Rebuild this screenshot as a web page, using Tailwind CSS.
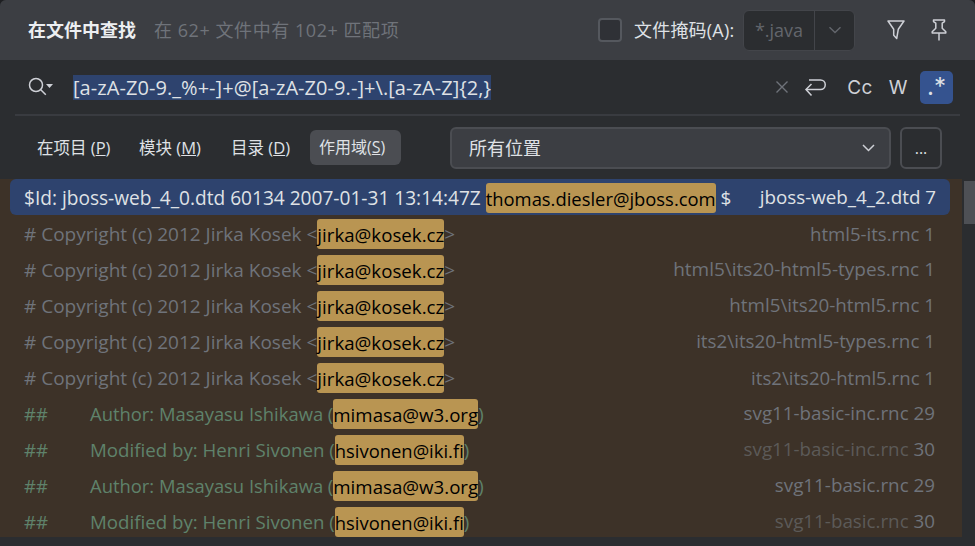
<!DOCTYPE html>
<html lang="zh">
<head>
  <meta charset="UTF-8" />
  <title>在文件中查找</title>
  <script src="https://cdn.jsdelivr.net/npm/@tailwindcss/browser@4"></script>
</head>
<body class="bg-[#1e1f22] overflow-hidden">
  <div class="w-[975px] h-[546px] flex flex-col bg-[#2b2d30] rounded-t-[6px] overflow-hidden text-[#dfe1e5] font-['Open_Sans','Noto_Sans_CJK_SC',sans-serif]">
    <!-- header -->
    <header class="h-[60px] shrink-0 bg-[#3c3e43] flex items-center pl-[28px] text-[18px]">
      <h1 class="font-bold text-[#eceef1] w-[126px]">在文件中查找</h1>
      <span class="text-[#6f737a] tracking-[0.55px]">在 62+ 文件中有 102+ 匹配项</span>
      <div class="ml-auto flex items-center">
        <span class="w-[24px] h-[24px] rounded-[4px] border-2 border-[#55585e] bg-[#2f3136] mr-[12px]"></span>
        <span class="w-[109px] text-[#dfe1e5] tracking-[0.2px]">文件掩码(A):</span>
        <div class="flex h-[41px] w-[112px] rounded-[6px] border border-[#43454a] bg-[#2b2d30] mr-[32px]">
          <span class="w-[70px] flex items-center justify-center text-[#63666c]">*.java</span>
          <span class="flex-1 border-l border-[#43454a] flex items-center justify-center">
            <svg width="14" height="8" viewBox="0 0 14 8" fill="none" stroke="#63666c" stroke-width="1.4"><path d="M1.500 1.200 7 6.600l5.500-5.400"/></svg>
          </span>
        </div>
        <svg class="mr-[26px]" width="18" height="20" viewBox="0 0 18 20" fill="none" stroke="#ced0d6" stroke-width="1.5" stroke-linejoin="round"><path d="M1 1h16l-5.700 8.200-1.600 9.300-3-3.200V9.200z"/></svg>
        <svg class="mr-[28px]" width="16" height="22" viewBox="0 0 16 22" fill="none" stroke="#ced0d6" stroke-width="1.5" stroke-linejoin="round"><path d="M2.500 1h11v1.600l-2.300 1.600v5l3.600 3.600v1.200H1.200v-1.200l3.600-3.600v-5L2.500 2.600zM8 14v7.500"/></svg>
      </div>
    </header>

    <!-- search row -->
    <div class="h-[56px] shrink-0 mx-[15px] border-b-2 border-[#393b40] flex items-center">
      <svg class="ml-[13px]" width="25" height="20" viewBox="0 0 25 20" fill="none" stroke="#ced0d6" stroke-width="1.5"><circle cx="8" cy="8" r="6.500"/><path d="m12.800 12.800 5 5"/><path d="M18 7h7l-3.500 4z" fill="#ced0d6" stroke="none"/></svg>
      <span class="ml-[20px] h-[25px] leading-[25px] bg-[#2e436e] text-[#dfe1e5] text-[20px] tracking-[0.06px] whitespace-pre">[a-zA-Z0-9._%+-]+@[a-zA-Z0-9.-]+\.[a-zA-Z]{2,}</span>
      <div class="ml-auto flex items-center">
        <svg width="12" height="12" viewBox="0 0 12 12" stroke="#6f737a" stroke-width="1.4"><path d="m.5.5 11 11M11.500.5l-11 11"/></svg>
        <svg class="ml-[16px] mt-[2px]" width="22" height="20" viewBox="0 0 22 20" fill="none" stroke="#ced0d6" stroke-width="1.5"><path d="M5 2h11.500a4.500 4.500 0 0 1 0 9.500H2"/><path d="m7.500 6-5.500 5.500 5.500 6"/></svg>
        <span class="ml-[21px] w-[26px] text-center text-[19px] leading-none text-[#ced0d6] font-['Inter'] tracking-[0.5px]">Cc</span>
        <span class="ml-[15px] w-[20px] text-center text-[19px] leading-none text-[#ced0d6] font-['Inter']">W</span>
        <span class="ml-[12px] mr-[7px] w-[33px] h-[33px] rounded-[5px] bg-[#35538f] flex items-center justify-center text-[24px] leading-none text-[#dfe1e5] font-['Inter']">.*</span>
      </div>
    </div>

    <!-- scope row -->
    <div class="h-[64px] shrink-0 flex items-center pl-[37px] text-[16.500px] text-[#dfe1e5]">
      <span class="w-[73px] whitespace-nowrap">在项目 (<u>P</u>)</span>
      <span class="ml-[29px] w-[63px] whitespace-nowrap">模块 (<u>M</u>)</span>
      <span class="ml-[29px] w-[58px] whitespace-nowrap">目录 (<u>D</u>)</span>
      <span class="ml-[21px] h-[35px] w-[91px] rounded-[6px] bg-[#4b4d52] flex items-center pl-[9px] text-[16px] -mt-[2px]">作用域(<u>S</u>)</span>
      <div class="ml-[49px] w-[441px] h-[42px] rounded-[6px] border-2 border-[#4b4d52] bg-[#3c3e43] flex items-center pl-[17px] pr-[14px] text-[18px]">
        <span>所有位置</span>
        <svg class="ml-auto" width="13" height="8" viewBox="0 0 13 8" fill="none" stroke="#ced0d6" stroke-width="1.5"><path d="m1 1 5.500 5.500L12 1"/></svg>
      </div>
      <div class="ml-[9px] w-[42px] h-[42px] rounded-[6px] border-2 border-[#4b4d52] flex items-center justify-center text-[16px]">...</div>
    </div>

    <!-- results -->
    <div class="h-[358px] shrink-0 flex bg-[#3d3228] -mt-[1px] text-[19px] leading-[37px] whitespace-nowrap overflow-hidden">
      <ul class="w-[962px] shrink-0 text-[#6f737a]">
        <li class="h-[36px] ml-[10px] mr-[12px] pl-[14px] pr-[14px] rounded-[6px] bg-[#2e436e] text-[#dfe1e5] flex justify-between">
          <span><span class="text-[19.100px]">$Id: jboss-web_4_0.dtd 60134 2007-01-31 13:14:47Z </span><mark class="bg-[#b99552] text-black rounded-[3px] py-[2.500px] text-[18.400px]">thomas.diesler@jboss.com</mark> $</span>
          <span class="text-[18.800px]">jboss-web_4_2.dtd 7</span>
        </li>
        <li class="h-[36px] pl-[24px] pr-[27px] flex justify-between"><span># Copyright (c) 2012 Jirka Kosek &lt;<mark class="bg-[#b99552] text-black rounded-[3px] py-[2.500px] text-[18.700px]">jirka@kosek.cz</mark>&gt;</span><span class="text-[18.600px]">html5-its.rnc 1</span></li>
        <li class="h-[36px] pl-[24px] pr-[27px] flex justify-between"><span># Copyright (c) 2012 Jirka Kosek &lt;<mark class="bg-[#b99552] text-black rounded-[3px] py-[2.500px] text-[18.700px]">jirka@kosek.cz</mark>&gt;</span><span class="text-[19px]">html5\its20-html5-types.rnc 1</span></li>
        <li class="h-[36px] pl-[24px] pr-[27px] flex justify-between"><span># Copyright (c) 2012 Jirka Kosek &lt;<mark class="bg-[#b99552] text-black rounded-[3px] py-[2.500px] text-[18.700px]">jirka@kosek.cz</mark>&gt;</span><span class="text-[18.800px]">html5\its20-html5.rnc 1</span></li>
        <li class="h-[36px] pl-[24px] pr-[27px] flex justify-between"><span># Copyright (c) 2012 Jirka Kosek &lt;<mark class="bg-[#b99552] text-black rounded-[3px] py-[2.500px] text-[18.700px]">jirka@kosek.cz</mark>&gt;</span><span class="text-[18.800px]">its2\its20-html5-types.rnc 1</span></li>
        <li class="h-[36px] pl-[24px] pr-[27px] flex justify-between"><span># Copyright (c) 2012 Jirka Kosek &lt;<mark class="bg-[#b99552] text-black rounded-[3px] py-[2.500px] text-[18.700px]">jirka@kosek.cz</mark>&gt;</span><span class="text-[18.600px]">its2\its20-html5.rnc 1</span></li>
        <li class="h-[36px] pl-[24px] pr-[27px] flex justify-between text-[#5f826b]"><span class="text-[18.400px]"><span class="inline-block w-[66px]">##</span>Author: Masayasu Ishikawa (<mark class="bg-[#b99552] text-black rounded-[3px] py-[2.500px] text-[18.700px]">mimasa@w3.org</mark>)</span><span class="text-[#6f737a] text-[18.800px]">svg11-basic-inc.rnc 29</span></li>
        <li class="h-[36px] pl-[24px] pr-[27px] flex justify-between text-[#5f826b]"><span class="text-[18.700px]"><span class="inline-block w-[66px]">##</span>Modified by: Henri Sivonen (<mark class="bg-[#b99552] text-black rounded-[3px] py-[2.500px] text-[18.400px]">hsivonen@iki.fi</mark>)</span><span class="text-[#5c5a58] text-[18.800px]">svg11-basic-inc.rnc <span class="text-[#6f737a]">30</span></span></li>
        <li class="h-[36px] pl-[24px] pr-[27px] flex justify-between text-[#5f826b]"><span class="text-[18.400px]"><span class="inline-block w-[66px]">##</span>Author: Masayasu Ishikawa (<mark class="bg-[#b99552] text-black rounded-[3px] py-[2.500px] text-[18.700px]">mimasa@w3.org</mark>)</span><span class="text-[#6f737a] text-[18.800px]">svg11-basic.rnc 29</span></li>
        <li class="h-[36px] pl-[24px] pr-[27px] flex justify-between text-[#5f826b]"><span class="text-[18.700px]"><span class="inline-block w-[66px]">##</span>Modified by: Henri Sivonen (<mark class="bg-[#b99552] text-black rounded-[3px] py-[2.500px] text-[18.400px]">hsivonen@iki.fi</mark>)</span><span class="text-[#5c5a58] text-[18.800px]">svg11-basic.rnc <span class="text-[#6f737a]">30</span></span></li>
      </ul>
      <div class="flex-1 bg-[#2b2d30] pl-[2px]">
        <div class="h-[43px] mt-[2px] bg-[#4e5055]"></div>
      </div>
    </div>
  </div>
</body>
</html>
